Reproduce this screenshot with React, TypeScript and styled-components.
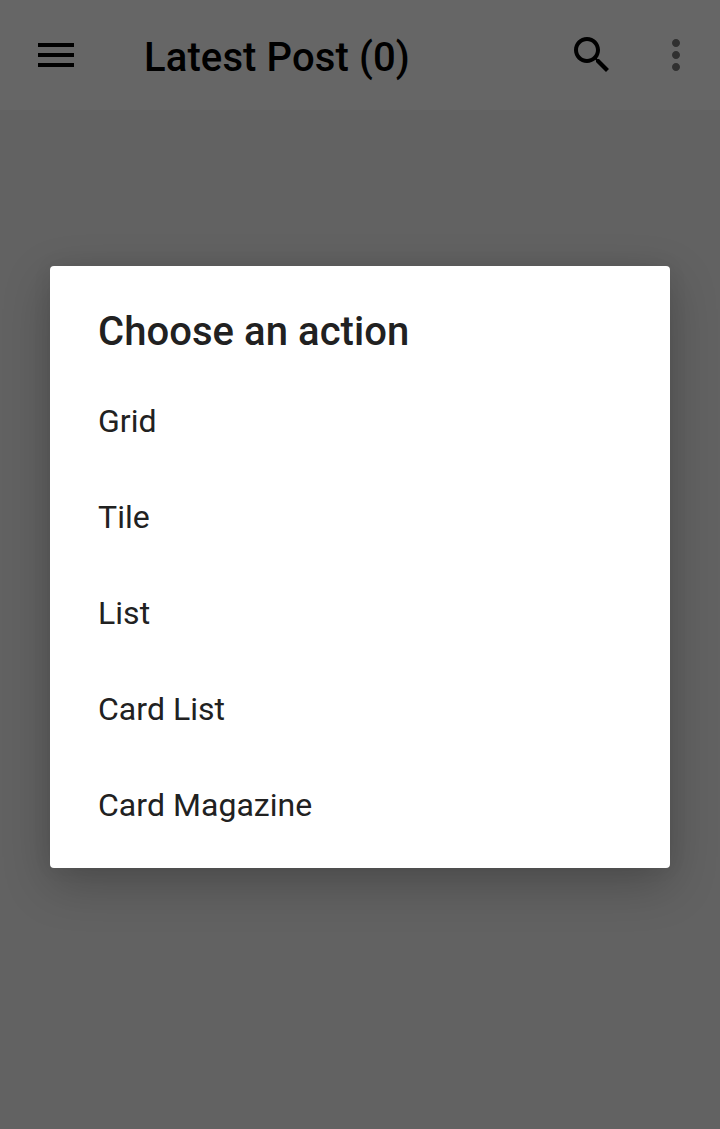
import React from "react";
import styled, { createGlobalStyle } from "styled-components";

const GlobalStyle = createGlobalStyle`
  * { box-sizing: border-box; }
  body { margin: 0; background: #626262; font-family: Roboto, sans-serif; }
`;
const Screen = styled.div`
  width: 720px;
  height: 1129px;
  background: #626262;
  overflow: hidden;
`;
const AppBar = styled.header`
  height: 110px;
  padding: 0 32px;
  display: flex;
  align-items: center;
  background: #666666;
`;
const Icon = styled.svg<{ $color?: string }>`
  width: 48px;
  height: 48px;
  flex: none;
  fill: ${(p) => p.$color ?? "#000"};
`;
const BarTitle = styled.h1`
  flex: 1;
  margin: 0;
  padding: 6px 0 0 64px;
  font-size: 40px;
  line-height: 48px;
  font-weight: 500;
  letter-spacing: 0.12px;
  color: #000;
`;
const Actions = styled.div`
  display: flex;
  gap: 36px;
  margin-right: -12px;
`;
const Dialog = styled.section`
  width: 620px;
  height: 602px;
  margin: 156px auto 0;
  padding-top: 42px;
  background: #fff;
  border-radius: 4px;
  box-shadow: 0 16px 48px rgba(0, 0, 0, 0.23), 0 0 20px rgba(0, 0, 0, 0.06);
`;
const DialogTitle = styled.h2`
  margin: 0 0 17px;
  padding: 0 48px;
  font-size: 40px;
  line-height: 48px;
  font-weight: 500;
  letter-spacing: 0.06px;
  color: #212121;
`;
const Options = styled.ul`
  margin: 0;
  padding: 0;
  list-style: none;
`;
const Option = styled.li`
  height: 96px;
  padding: 0 48px;
  display: flex;
  align-items: center;
  font-size: 32px;
  letter-spacing: 0.04px;
  color: #212121;
`;

const options = ["Grid", "Tile", "List", "Card List", "Card Magazine"];

export default function App() {
  return (
    <Screen>
      <GlobalStyle />
      <AppBar>
        <Icon viewBox="0 0 24 24"><path d="M3 18h18v-2H3v2zm0-5h18v-2H3v2zm0-7v2h18V6H3z" /></Icon>
        <BarTitle>Latest Post (0)</BarTitle>
        <Actions>
          <Icon viewBox="0 0 24 24"><path d="M15.5 14h-.79l-.28-.27C15.41 12.59 16 11.11 16 9.5 16 5.91 13.09 3 9.5 3S3 5.91 3 9.5 5.91 16 9.5 16c1.61 0 3.09-.59 4.23-1.57l.27.28v.79l5 4.99L20.49 19l-4.99-5zm-6 0C7.01 14 5 11.99 5 9.5S7.01 5 9.5 5 14 7.01 14 9.5 11.99 14 9.5 14z" /></Icon>
          <Icon viewBox="0 0 24 24" $color="#303030"><path d="M12 8c1.1 0 2-.9 2-2s-.9-2-2-2-2 .9-2 2 .9 2 2 2zm0 2c-1.1 0-2 .9-2 2s.9 2 2 2 2-.9 2-2-.9-2-2-2zm0 6c-1.1 0-2 .9-2 2s.9 2 2 2 2-.9 2-2-.9-2-2-2z" /></Icon>
        </Actions>
      </AppBar>
      <Dialog>
        <DialogTitle>Choose an action</DialogTitle>
        <Options>
          {options.map((o) => <Option key={o}>{o}</Option>)}
        </Options>
      </Dialog>
    </Screen>
  );
}
